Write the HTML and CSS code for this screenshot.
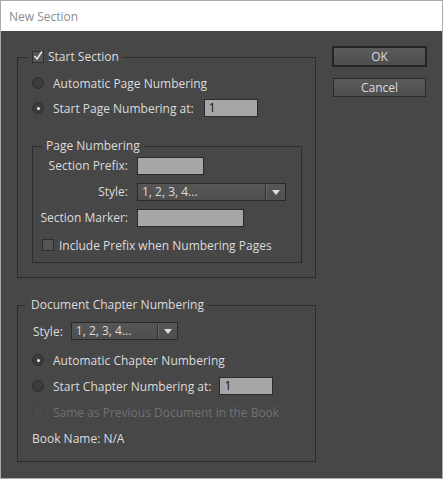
FILE: index.html
```html
<!DOCTYPE html>
<html>
<head>
<meta charset="utf-8">
<link rel="stylesheet" href="styles.css">
</head>
<body>
<div class="window">
  <div class="titlebar">New Section</div>
  <div class="dialog">
    <div class="main">
      <fieldset class="group group-section">
        <legend class="legend legend-section">
          <span class="check"><svg width="12" height="12" viewBox="0 0 12 12"><polyline points="2.5,6 5,9 10,1.5" fill="none" stroke="#e6e6e6" stroke-width="1.6"/></svg></span>
          <span>Start Section</span>
        </legend>
        <div class="section-body">
          <div class="row"><span class="radio"></span><span class="row-text">Automatic Page Numbering</span></div>
          <div class="row row-gap"><span class="radio on"></span><span class="row-text">Start Page Numbering at:</span><span class="field field-page">1</span></div>
          <fieldset class="group group-inner">
            <legend class="legend legend-inner">Page Numbering</legend>
            <div class="inner-body">
              <div class="form-grid">
                <span class="label">Section Prefix:</span><span class="field field-prefix"></span>
                <span class="label">Style:</span>
                <span class="select select-page"><span class="select-text">1, 2, 3, 4...</span><span class="select-sep"></span><span class="select-arrow"></span></span>
                <span class="label">Section Marker:</span><span class="field field-marker"></span>
              </div>
              <div class="row check-row"><span class="check"></span><span class="row-text">Include Prefix when Numbering Pages</span></div>
            </div>
          </fieldset>
        </div>
      </fieldset>

      <fieldset class="group group-chapter">
        <legend class="legend legend-chapter">Document Chapter Numbering</legend>
        <div class="chapter-body">
          <div class="row style-row"><span class="style-label">Style:</span>
            <span class="select select-chapter"><span class="select-text">1, 2, 3, 4...</span><span class="select-sep"></span><span class="select-arrow"></span></span>
          </div>
          <div class="row first-radio"><span class="radio on"></span><span class="row-text">Automatic Chapter Numbering</span></div>
          <div class="row row-gap"><span class="radio"></span><span class="row-text">Start Chapter Numbering at:</span><span class="field field-chapter">1</span></div>
          <div class="row row-gap disabled"><span class="radio off"></span><span class="row-text">Same as Previous Document in the Book</span></div>
          <div class="row row-gap"><span class="book">Book Name: N/A</span></div>
        </div>
      </fieldset>
    </div>
    <div class="buttons">
      <div class="btn btn-default">OK</div>
      <div class="btn btn-cancel">Cancel</div>
    </div>
  </div>
</div>
</body>
</html>
```
FILE: styles.css
```css
html, body {
  margin: 0;
  padding: 0;
  background: #474747;
}
.window {
  box-sizing: border-box;
  width: 443px;
  height: 479px;
  border: 1px solid #a9a9a9;
  background: #474747;
  display: flex;
  flex-direction: column;
  font-family: "Open Sans", "Noto Sans", sans-serif;
  font-size: 12px;
  color: #dcdcdc;
  overflow: hidden;
}
.titlebar {
  height: 30px;
  flex: none;
  background: #ffffff;
  color: #8c8c8c;
  display: flex;
  align-items: center;
  padding-left: 8px;
  font-size: 12px;
}
.dialog {
  display: flex;
  align-items: flex-start;
  padding: 0 0 0 16px;
}
.main {
  width: 299px;
  flex: none;
  padding-top: 19px;
}
.group {
  margin: 0;
  padding: 0;
  border: 1px solid #2c2c2c;
  min-width: 0;
}
.legend {
  height: 14px;
  line-height: 14px;
  padding: 0 4px;
  display: flex;
  align-items: center;
  white-space: nowrap;
}
.legend-section {
  margin-left: 10px;
}
.legend-section .check {
  margin-right: 4px;
}
.legend-inner {
  margin-left: 9px;
}
.legend-chapter {
  margin-left: 8px;
  padding: 0 5px;
}
.section-body {
  padding: 10px 13px 14px 14px;
}
.row {
  height: 18px;
  display: flex;
  align-items: center;
  white-space: nowrap;
}
.row-gap {
  margin-top: 8px;
}
.section-body > .row-gap {
  margin-top: 7px;
}
.row-text {
  margin-left: 9px;
}
.radio {
  box-sizing: border-box;
  width: 12px;
  height: 12px;
  border-radius: 50%;
  border: 1px solid #303030;
  background: radial-gradient(circle at 50% 40%, #404040, #363636);
  display: flex;
  align-items: center;
  justify-content: center;
  flex: none;
}
.radio.on::after {
  content: "";
  width: 3px;
  height: 3px;
  border-radius: 50%;
  background: #f0f0f0;
}
.radio.off {
  border-color: #434343;
  background: #4a4a4a;
}
.disabled {
  color: #717171;
}
.field {
  box-sizing: border-box;
  height: 18px;
  background: #a6a6a6;
  border: 1px solid #2a2a2a;
  color: #111;
  padding-left: 4px;
  line-height: 16px;
  display: inline-block;
}
.field-page {
  width: 54px;
  margin-left: 10px;
}
.field-chapter {
  width: 54px;
  margin-left: 8px;
}
.field-prefix {
  width: 67px;
}
.field-marker {
  width: 107px;
}
.group-inner {
  margin-top: 22px;
}
.inner-body {
  padding: 4px 0 8px 0;
}
.form-grid {
  display: grid;
  grid-template-columns: 95px auto;
  column-gap: 9px;
  row-gap: 8px;
  justify-items: start;
  align-items: center;
}
.label {
  justify-self: end;
  line-height: 18px;
}
.select {
  box-sizing: border-box;
  height: 18px;
  border: 1px solid #2a2a2a;
  background: linear-gradient(#565656, #4f4f4f);
  display: flex;
  align-items: center;
  color: #dcdcdc;
}
.select-text {
  flex: 1;
  padding-left: 4px;
  line-height: 16px;
}
.select-sep {
  width: 1px;
  height: 14px;
  background: #2e2e2e;
  border-right: 1px solid #6a6a6a;
}
.select-arrow {
  width: 0;
  height: 0;
  border-left: 4px solid transparent;
  border-right: 4px solid transparent;
  border-top: 5px solid #e0e0e0;
  margin: 1px 5px 0 5px;
}
.select-page {
  width: 149px;
}
.select-chapter {
  width: 107px;
}
.check-row {
  margin-top: 9px;
  margin-left: 9px;
}
.check-row .row-text {
  margin-left: 5px;
}
.check {
  box-sizing: border-box;
  width: 12px;
  height: 12px;
  border: 1px solid #2e2e2e;
  background: #555;
  display: inline-flex;
  flex: none;
  position: relative;
}
.check svg {
  position: absolute;
  left: -1px;
  top: -2px;
}
.group-chapter {
  margin-top: 20px;
}
.chapter-body {
  padding: 10px 14px 14px 14px;
}
.style-label {
  margin-left: 1px;
  margin-right: 8px;
}
.first-radio {
  margin-top: 11px;
}
.book {
  margin-left: 0;
}
.buttons {
  margin-left: 16px;
  padding-top: 15px;
  width: 95px;
  display: flex;
  flex-direction: column;
  align-items: center;
}
.btn {
  box-sizing: border-box;
  display: flex;
  align-items: center;
  justify-content: center;
  background: linear-gradient(#5b5b5b, #4e4e4e);
  color: #dcdcdc;
}
.btn-default {
  width: 95px;
  height: 21px;
  border: 2px solid #252525;
}
.btn-cancel {
  width: 93px;
  height: 19px;
  border: 1px solid #2a2a2a;
  margin-top: 11px;
}
```
